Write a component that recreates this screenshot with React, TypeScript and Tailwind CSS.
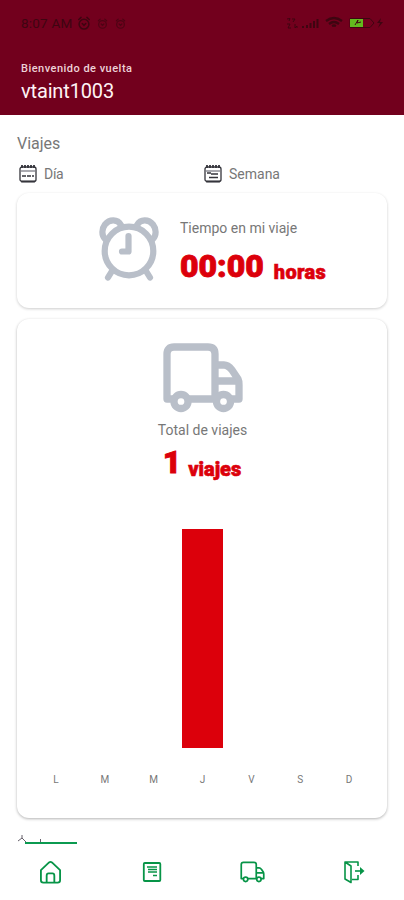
import React from "react"

const days = [
  { label: "L", trips: 0 },
  { label: "M", trips: 0 },
  { label: "M", trips: 0 },
  { label: "J", trips: 1 },
  { label: "V", trips: 0 },
  { label: "S", trips: 0 },
  { label: "D", trips: 0 },
]

function AlarmIcon({ className }: { className?: string }) {
  return (
    <svg viewBox="0 0 60 64" className={className} fill="none" stroke="currentColor" strokeWidth="6.200" strokeLinecap="round" strokeLinejoin="round">
      <circle cx="30" cy="34" r="24.300" />
      <path d="M6 22C2.500 18 2.500 12 6 7.500C10.500 2 18.500 2 22 8" />
      <path d="M38 8C41.500 2 49.500 2 54 7.500C57.500 12 57.500 18 54 22" />
      <path d="M29.500 19V34.500H23M13 54L9 60.500M47 54L51 60.500" />
    </svg>
  )
}

function SmallAlarmIcon({ className }: { className?: string }) {
  return (
    <svg viewBox="0 0 12 12" className={className} fill="none" stroke="currentColor" strokeWidth="1.300" strokeLinecap="round">
      <circle cx="6" cy="7" r="4.200" />
      <path d="M1.500 3L3.500 1.200M8.500 1.200L10.500 3M4.500 6.500L6 8L7.500 6.500" />
    </svg>
  )
}

function TruckIcon({ className, strokeWidth }: { className?: string; strokeWidth: number }) {
  return (
    <svg viewBox="0 0 80 70" className={className} fill="none" stroke="currentColor" strokeWidth={strokeWidth} strokeLinejoin="round">
      <path d="M11 56H4V11Q4 4 11 4H45Q52 4 52 11V56H25" />
      <path d="M52 22H61Q65 22 69 27L75 36Q76 38 76 42V56H67M52 38H75" />
      <circle cx="18" cy="58.500" r="7" />
      <circle cx="60.500" cy="58.500" r="7" />
    </svg>
  )
}

function CalendarIcon({ week = false }: { week?: boolean }) {
  return (
    <svg viewBox="0 0 18 18" className="h-[18px] w-[18px]" fill="none" stroke="#34343b" strokeWidth="1.300">
      <rect x="1" y="2" width="16" height="14.500" rx="2" />
      <path d="M3 0V3M6 0V3M9 0V3M12 0V3M15 0V3" strokeWidth="1.800" />
      <path d="M2 16.500H16" strokeWidth="1.800" />
      <path d="M2 6H16" stroke="#aaaab0" strokeWidth="2" />
      {week ? <path d="M3 8H7M7 9H14M5 12.500H14" /> : <path d="M3 11H7M8 11H12M13 11H15" />}
    </svg>
  )
}

function StatusBar() {
  return (
    <div className="flex h-4 items-center justify-between pr-[20px] text-[#3e0511]">
      <div className="flex items-center">
        <span className="w-[56px] text-[13.500px] leading-4 tracking-[0.200px] whitespace-nowrap">8:07 AM</span>
        <SmallAlarmIcon className="h-[14px] w-[14px]" />
        <SmallAlarmIcon className="ml-[6px] h-[11px] w-[11px] opacity-70" />
        <SmallAlarmIcon className="ml-[7px] h-[11px] w-[11px] opacity-70" />
      </div>
      <svg viewBox="0 0 98 16" className="h-4 w-[98px]" fill="none" stroke="currentColor">
        <path d="M1 4L4 3.500L3 6M6 4H9L7 7M1 9L4 9L2 13H5M9 9V13L11 11V13" />
        <path d="M17 13V11M21 13V10M24.500 13V8M28 13V6M31.500 13V4" strokeWidth="2" />
        <path d="M40 6Q48 0 56 6M43 9Q48 5 53 9M46 11Q48 10 50 11" strokeWidth="2.300" />
        <path d="M64 3.500H84L88 8L84 12.500H64Z" />
        <rect x="64" y="4" width="13" height="8" fill="#63ba1e" stroke="none" />
        <path d="M69 10L72 5L71 8L75 7" />
        <path d="M95 3L91 8H94L92 13L97 7H94Z" fill="currentColor" stroke="none" />
      </svg>
    </div>
  )
}

function BottomNav() {
  return (
    <nav className="flex h-[56px] items-center bg-white text-[#079447]">
      <div className="flex flex-1 justify-center">
        <svg viewBox="0 0 24 24" className="h-6 w-[23px]" fill="none" stroke="currentColor" strokeWidth="1.900" strokeLinejoin="round">
          <path d="M2 10L10.500 2Q12 .8 13.500 2L22 10V20.500Q22 23 19.500 23H4.500Q2 23 2 20.500Z" />
          <path d="M8 23V16Q8 13.500 10 13.500H14Q16 13.500 16 16V23" />
        </svg>
      </div>
      <div className="flex flex-1 justify-center">
        <svg viewBox="0 0 20 22" className="h-[22px] w-5" fill="none" stroke="currentColor" strokeWidth="1.800">
          <rect x="1.800" y="2" width="16.500" height="18" rx="1" />
          <path d="M5 6H15M6 8.500H15M6 11H15M11 14.500H15" strokeWidth="1.300" />
        </svg>
      </div>
      <div className="flex flex-1 justify-center">
        <TruckIcon className="h-[22px] w-[25px]" strokeWidth={5.5} />
      </div>
      <div className="flex flex-1 justify-center">
        <svg viewBox="0 0 22 24" className="h-6 w-[22px]" fill="none" stroke="currentColor" strokeWidth="1.600" strokeLinejoin="round">
          <path d="M2 2V19L8 22.500V6L2 2H15V6M9 19.500H15V15" />
          <path d="M12 11H20" />
          <path d="M17 7L21.500 11L17 15Z" fill="currentColor" stroke="none" />
        </svg>
      </div>
    </nav>
  )
}

export default function App() {
  return (
    <div className="flex h-[900px] w-[404px] flex-col overflow-hidden bg-white font-['Roboto','Liberation_Sans',sans-serif] text-[#777777]">
      <header className="h-[115px] bg-[#72001d] pt-[15px] pl-[21px]">
        <StatusBar />
        <p className="mt-[30px] text-[11px] leading-4 font-medium tracking-[0.480px] text-[#edd2d8]">Bienvenido de vuelta</p>
        <h1 className="text-[20px] leading-7 tracking-[-0.150px] text-[#fff3f5]">vtaint1003</h1>
      </header>

      <main className="min-h-0 flex-1 overflow-hidden px-[17px] pt-[18px]">
        <h2 className="text-[16px] leading-[22px]">Viajes</h2>
        <div className="mt-2 mb-[9px] flex h-[21px] text-[14px] leading-[21px]">
          <div className="flex w-[186px] items-center gap-[7px] pl-0.5">
            <CalendarIcon />
            <span className="relative top-px tracking-[-0.300px]">Día</span>
          </div>
          <div className="flex items-center gap-[7px] pl-px">
            <CalendarIcon week />
            <span className="relative top-px">Semana</span>
          </div>
        </div>

        <section className="flex h-[115px] rounded-xl bg-white pt-[24px] pl-[82px] shadow-[0_1px_3px_rgba(0,0,0,0.200)]">
          <AlarmIcon className="h-[64px] w-[60px] text-[#b9bfc9]" />
          <div className="pl-[21px]">
            <p className="mt-px text-[14px] leading-5">Tiempo en mi viaje</p>
            <p className="mt-[8px] flex items-baseline gap-[10px] font-black whitespace-nowrap text-[#dc000b]">
              <span className="text-[32px] leading-10 [-webkit-text-stroke:0.900px_#dc000b]">00:00</span>
              <span className="relative top-0.5 text-[20px] tracking-[0.300px] [-webkit-text-stroke:0.600px_#dc000b]">horas</span>
            </p>
          </div>
        </section>

        <section className="mt-[11px] flex h-[499px] flex-col items-center rounded-xl bg-white pt-[24px] shadow-[0_1px_3px_rgba(0,0,0,0.300)]">
          <TruckIcon className="ml-0.5 h-[70px] w-[80px] text-[#b9bfc9]" strokeWidth={7.3} />
          <p className="mt-[7px] ml-px text-[14px] leading-5">Total de viajes</p>
          <p className="mt-[2px] flex items-baseline gap-[7px] font-black text-[#dc000b]">
            <span className="text-[32px] leading-10 [-webkit-text-stroke:0.900px_#dc000b]">1</span>
            <span className="relative top-[3px] text-[20px] [-webkit-text-stroke:0.600px_#dc000b]">viajes</span>
          </p>
          <div className="mt-[47px] ml-px flex w-[342px]">
            {days.map((day, index) => (
              <div key={index} className="flex flex-1 flex-col items-center">
                <div className="flex h-[219px] items-end">
                  <div className="w-[41px] bg-[#dc000b]" style={{ height: `${day.trips * 100}%` }} />
                </div>
                <span className="mt-[24px] text-[10px] leading-4">{day.label}</span>
              </div>
            ))}
          </div>
        </section>

        <div className="mt-[16px] h-[10px]">
          <svg viewBox="0 0 62 10" className="h-[10px] w-[62px]" fill="none">
            <path d="M1 7L5 4L9 8M5 4V1M23.500 5V9" stroke="#66606b" />
            <path d="M8 9H60" stroke="#0b9a50" strokeWidth="2" />
          </svg>
        </div>
      </main>

      <BottomNav />
    </div>
  )
}
